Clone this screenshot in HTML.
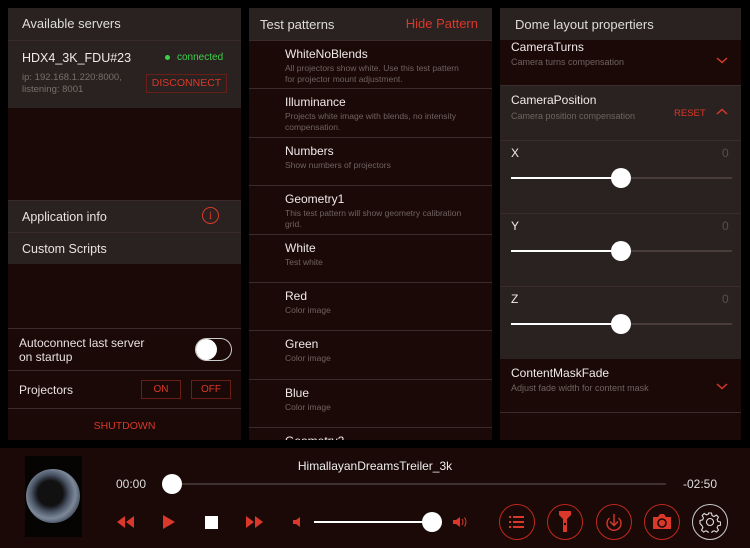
<!DOCTYPE html>
<html><head><meta charset="utf-8"><style>
*{margin:0;padding:0;box-sizing:border-box}
body{width:750px;height:548px;background:#000;font-family:"Liberation Sans",sans-serif;color:#e8e2e0;position:relative;overflow:hidden}
.a{position:absolute}
.hd{background:#2a2220;font-size:13px;color:#ddd}
.lt{background:#2a2220}
.dk{background:#1a0907}
.sep{border-top:1px solid #3a2c2a}
.red{color:#d9382a}
.sub{font-size:8.5px;color:#6f6360;line-height:11px}
.ti{font-size:12px;color:#f0eaea}
.btn{position:absolute;border:1px solid #6a1e18;color:#d9382a;font-size:10px;text-align:center}
.trk{position:absolute;height:2px;background:#4a3c3a}
.fill{position:absolute;height:2px;background:#fff}
.knob{position:absolute;width:20px;height:20px;border-radius:50%;background:#fff}
.ci{position:absolute;width:36px;height:36px;border-radius:50%;border:1.3px solid #c0281e;top:504px}
</style></head><body>
<!-- left panel -->
<div class="a dk" style="left:8px;top:8px;width:233px;height:432px"></div>
<div class="a hd" style="left:8px;top:8px;width:233px;height:32px;padding:8px 14px">Available servers</div>
<div class="a lt sep" style="left:8px;top:40px;width:233px;height:68px"></div>
<div class="a ti" style="left:22px;top:51px;font-size:12.5px">HDX4_3K_FDU#23</div>
<div class="a" style="left:165px;top:55px;width:5px;height:5px;border-radius:50%;background:#3bd04a"></div>
<div class="a" style="left:177px;top:52px;font-size:10px;color:#3bd04a">connected</div>
<div class="a sub" style="left:22px;top:72px;font-size:9.5px;line-height:12px;color:#7a6e6b">ip: 192.168.1.220:8000,<br>listening: 8001</div>
<div class="btn" style="left:146px;top:74px;width:81px;height:19px;line-height:17px;font-size:10.5px">DISCONNECT</div>
<div class="a lt sep" style="left:8px;top:200px;width:233px;height:33px;padding:9px 14px;font-size:12.5px">Application info</div>
<div class="a" style="left:202px;top:207px;width:17px;height:17px;border-radius:50%;border:1.3px solid #d9382a;color:#d9382a;font-size:12px;text-align:center;line-height:15px;font-family:'Liberation Serif',serif">i</div>
<div class="a lt sep" style="left:8px;top:232px;width:233px;height:32px;padding:9px 14px;font-size:12.5px">Custom Scripts</div>
<div class="a sep" style="left:8px;top:328px;width:233px;height:42px;padding:7px 11px;font-size:12px;line-height:14px">Autoconnect last server<br>on startup</div>
<div class="a" style="left:195px;top:338px;width:37px;height:23px;border-radius:12px;border:1.5px solid #ccc"></div>
<div class="a" style="left:196px;top:339px;width:21px;height:21px;border-radius:50%;background:#fff"></div>
<div class="a sep" style="left:8px;top:370px;width:233px;height:38px;padding:12px 11px;font-size:12px">Projectors</div>
<div class="btn" style="left:141px;top:380px;width:40px;height:19px;line-height:17px">ON</div>
<div class="btn" style="left:191px;top:380px;width:40px;height:19px;line-height:17px">OFF</div>
<div class="a sep red" style="left:8px;top:408px;width:233px;height:32px;text-align:center;padding-top:11px;font-size:10.5px">SHUTDOWN</div>
<!-- middle panel -->
<div class="a dk" style="left:249px;top:8px;width:243px;height:432px;overflow:hidden">
<div class="hd" style="height:32px;padding:9px 11px;position:relative">Test patterns<span class="red" style="position:absolute;right:14px;top:8px;font-size:13px">Hide Pattern</span></div>
<div style="padding-left:36px">
<div class="sep" style="height:48.4px;margin-left:-36px;padding:6px 0 0 36px"><div class="ti">WhiteNoBlends</div><div class="sub" style="margin-top:2px">All projectors show white. Use this test pattern<br>for projector mount adjustment.</div></div>
<div class="sep" style="height:48.4px;margin-left:-36px;padding:6px 0 0 36px"><div class="ti">Illuminance</div><div class="sub" style="margin-top:2px">Projects white image with blends, no intensity<br>compensation.</div></div>
<div class="sep" style="height:48.4px;margin-left:-36px;padding:6px 0 0 36px"><div class="ti">Numbers</div><div class="sub" style="margin-top:2px">Show numbers of projectors</div></div>
<div class="sep" style="height:48.4px;margin-left:-36px;padding:6px 0 0 36px"><div class="ti">Geometry1</div><div class="sub" style="margin-top:2px">This test pattern will show geometry calibration<br>grid.</div></div>
<div class="sep" style="height:48.4px;margin-left:-36px;padding:6px 0 0 36px"><div class="ti">White</div><div class="sub" style="margin-top:2px">Test white</div></div>
<div class="sep" style="height:48.4px;margin-left:-36px;padding:6px 0 0 36px"><div class="ti">Red</div><div class="sub" style="margin-top:2px">Color image</div></div>
<div class="sep" style="height:48.4px;margin-left:-36px;padding:6px 0 0 36px"><div class="ti">Green</div><div class="sub" style="margin-top:2px">Color image</div></div>
<div class="sep" style="height:48.4px;margin-left:-36px;padding:6px 0 0 36px"><div class="ti">Blue</div><div class="sub" style="margin-top:2px">Color image</div></div>
<div class="sep" style="height:48.4px;margin-left:-36px;padding:6px 0 0 36px"><div class="ti">Geometry2</div></div>
</div></div>
<!-- right panel -->
<div class="a dk" style="left:500px;top:8px;width:241px;height:432px"></div>
<div class="a hd" style="left:500px;top:8px;width:241px;height:32px;padding:9px 15px">Dome layout propertiers</div>
<div class="a ti" style="left:511px;top:40px">CameraTurns</div>
<div class="a sub" style="left:511px;top:57px;font-size:9px">Camera turns compensation</div>
<svg class="a" style="left:716px;top:56px" width="12" height="8"><path d="M1 2L6 6.5L11 2" stroke="#d9382a" stroke-width="1.5" fill="none"/></svg>
<div class="a lt sep" style="left:500px;top:85px;width:241px;height:274px"></div>
<div class="a ti" style="left:511px;top:93px">CameraPosition</div>
<div class="a sub" style="left:511px;top:111px;font-size:9px">Camera position compensation</div>
<div class="a red" style="left:674px;top:108px;font-size:9.5px">RESET</div>
<svg class="a" style="left:716px;top:108px" width="12" height="8"><path d="M1 6L6 1.5L11 6" stroke="#d9382a" stroke-width="1.5" fill="none"/></svg>
<div class="a sep" style="left:500px;top:140px;width:241px;height:0"></div>
<div class="a sep" style="left:500px;top:213px;width:241px;height:0"></div>
<div class="a sep" style="left:500px;top:286px;width:241px;height:0"></div>
<div class="a ti" style="left:511px;top:146px">X</div><div class="a" style="left:722px;top:146px;font-size:12px;color:#5a4e4c">0</div>
<div class="trk" style="left:511px;top:177px;width:221px"></div><div class="fill" style="left:511px;top:177px;width:110px"></div><div class="knob" style="left:611px;top:168px"></div>
<div class="a ti" style="left:511px;top:219px">Y</div><div class="a" style="left:722px;top:219px;font-size:12px;color:#5a4e4c">0</div>
<div class="trk" style="left:511px;top:250px;width:221px"></div><div class="fill" style="left:511px;top:250px;width:110px"></div><div class="knob" style="left:611px;top:241px"></div>
<div class="a ti" style="left:511px;top:292px">Z</div><div class="a" style="left:722px;top:292px;font-size:12px;color:#5a4e4c">0</div>
<div class="trk" style="left:511px;top:323px;width:221px"></div><div class="fill" style="left:511px;top:323px;width:110px"></div><div class="knob" style="left:611px;top:314px"></div>
<div class="a ti" style="left:511px;top:366px">ContentMaskFade</div>
<div class="a sub" style="left:511px;top:383px;font-size:9px">Adjust fade width for content mask</div>
<svg class="a" style="left:716px;top:382px" width="12" height="8"><path d="M1 2L6 6.5L11 2" stroke="#d9382a" stroke-width="1.5" fill="none"/></svg>
<div class="a sep" style="left:500px;top:412px;width:241px;height:0"></div>
<!-- bottom bar -->
<div class="a" style="left:0;top:448px;width:750px;height:100px;background:#1a0907"></div>
<div class="a" style="left:25px;top:456px;width:57px;height:81px;background:#060303"></div>
<div class="a" style="left:26px;top:469px;width:54px;height:54px;border-radius:50%;background:radial-gradient(circle at 45% 45%,#111 0 30%,#4a5566 45%,#7d8898 60%,#2d3848 80%,#1a2028 100%)"></div>
<div class="a" style="left:0;top:459px;width:750px;text-align:center;font-size:12px;color:#eee">HimallayanDreamsTreiler_3k</div>
<div class="a" style="left:116px;top:477px;font-size:12px;color:#ddd">00:00</div>
<div class="a" style="left:683px;top:477px;font-size:12px;color:#ddd">-02:50</div>
<div class="trk" style="left:172px;top:483px;width:494px;height:1.5px;background:#3e302e"></div>
<div class="knob" style="left:162px;top:474px"></div>
<svg class="a" style="left:116px;top:515px" width="20" height="14"><path d="M9 1L1 7L9 13ZM18 1L10 7L18 13Z" fill="#d9382a"/></svg>
<svg class="a" style="left:162px;top:515px" width="14" height="14"><path d="M1 0L13 7L1 14Z" fill="#d9382a"/></svg>
<div class="a" style="left:205px;top:516px;width:13px;height:13px;background:#fff"></div>
<svg class="a" style="left:245px;top:515px" width="20" height="14"><path d="M1 1L9 7L1 13ZM10 1L18 7L10 13Z" fill="#d9382a"/></svg>
<svg class="a" style="left:293px;top:516px" width="8" height="12"><path d="M0 4H3L7 1V11L3 8H0Z" fill="#d9382a"/></svg>
<div class="fill" style="left:314px;top:521px;width:118px;height:2px"></div>
<div class="knob" style="left:422px;top:512px"></div>
<svg class="a" style="left:453px;top:515px" width="16" height="14"><path d="M0 5H3L7 2V12L3 9H0Z" fill="#d9382a"/><path d="M9 4Q11 7 9 10M11.5 2.5Q14.5 7 11.5 11.5" stroke="#d9382a" fill="none" stroke-width="1"/></svg>
<div class="ci" style="left:499px"></div>
<svg class="a" style="left:508px;top:515px" width="18" height="14"><path d="M1 2h2M5 2h11M1 7h2M5 7h11M1 12h2M5 12h11" stroke="#d9382a" stroke-width="2"/></svg>
<div class="ci" style="left:547px"></div>
<svg class="a" style="left:558px;top:510px" width="14" height="24"><path d="M1 1H13V5L9 9V22H5V9L1 5Z" fill="#d9382a"/><circle cx="7" cy="14" r="1.2" fill="#1a0907"/></svg>
<div class="ci" style="left:596px"></div>
<svg class="a" style="left:603px;top:511px" width="22" height="22"><path d="M6.5 7A7 7 0 1 0 15.5 7" stroke="#d9382a" stroke-width="1.4" fill="none"/><path d="M11 3V14M7 10.5L11 14.5L15 10.5" stroke="#d9382a" stroke-width="1.4" fill="none"/></svg>
<div class="ci" style="left:644px"></div>
<svg class="a" style="left:652px;top:513px" width="20" height="17"><path d="M1 4H6L8 1H12L14 4H19V16H1Z" fill="#d9382a"/><circle cx="10" cy="10" r="4" fill="none" stroke="#1a0907" stroke-width="1.6"/></svg>
<div class="ci" style="left:692px;border-color:#ccc"></div>
<svg class="a" style="left:699px;top:511px" width="22" height="22" viewBox="0 0 22 22"><path d="M9.5 2h3l.6 2.6 2 .9 2.3-1.4 2.1 2.1-1.4 2.3.9 2 2.6.6v3l-2.6.6-.9 2 1.4 2.3-2.1 2.1-2.3-1.4-2 .9-.6 2.6h-3l-.6-2.6-2-.9-2.3 1.4-2.1-2.1 1.4-2.3-.9-2L1 12.5v-3l2.6-.6.9-2-1.4-2.3 2.1-2.1 2.3 1.4 2-.9Z" fill="none" stroke="#ddd" stroke-width="1.1"/><circle cx="11" cy="11" r="3.5" fill="none" stroke="#ddd" stroke-width="1.1"/></svg>
</body></html>
